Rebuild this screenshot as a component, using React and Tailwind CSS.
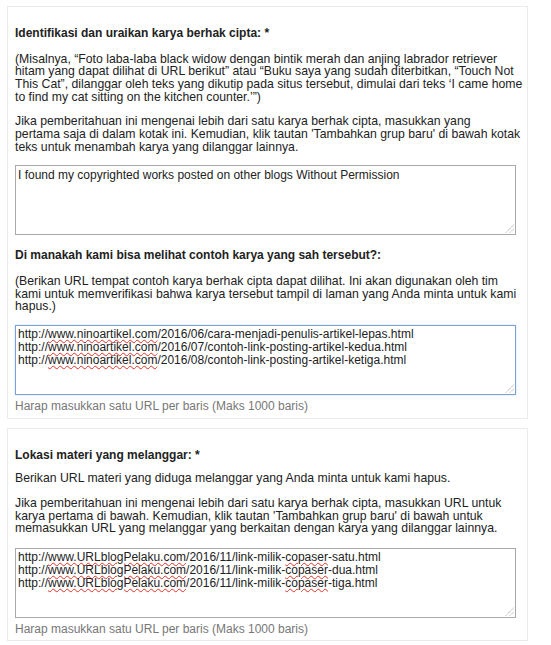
import React from 'react'

const font = { fontFamily: '"Liberation Sans", Arial, sans-serif' }

function Grip() {
  return (
    <svg width="9" height="9" viewBox="0 0 9 9" className="absolute right-[1px] bottom-[1px]">
      <line x1="8.5" y1="1" x2="1" y2="8.5" stroke="#888" strokeWidth="1" strokeDasharray="1 1" />
      <line x1="8.5" y1="5" x2="5" y2="8.5" stroke="#888" strokeWidth="1" strokeDasharray="1 1" />
    </svg>
  )
}

function Box({ focused, children }) {
  return (
    <div
      className={
        'relative w-[501px] h-[70px] px-[2px] pt-[2px] bg-white text-[12px] text-[#222] ' +
        (focused
          ? 'border border-[#7d9fd6] shadow-[0_0_2px_rgba(77,144,254,0.35)]'
          : 'border border-[#a9a9a9]')
      }
    >
      {children}
      <Grip />
    </div>
  )
}

// kata yang digarisbawahi oleh pemeriksa ejaan
function Typo({ children }) {
  return (
    <span className="underline decoration-wavy decoration-[#e0302a] decoration-1 underline-offset-[1px]">
      {children}
    </span>
  )
}

// paragraf dengan baris yang sama seperti di tangkapan layar
function Lines({ lines, className = '' }) {
  return (
    <p className={'whitespace-nowrap ' + className}>
      {lines.map((l, i) => (
        <React.Fragment key={i}>
          {l}
          {i < lines.length - 1 && <br />}
        </React.Fragment>
      ))}
    </p>
  )
}

function Hint() {
  return <p className="mt-[5px] text-[12px] text-[#777]">Harap masukkan satu URL per baris (Maks 1000 baris)</p>
}

export default function App() {
  const sample = [
    '2016/06/cara-menjadi-penulis-artikel-lepas.html',
    '2016/07/contoh-link-posting-artikel-kedua.html',
    '2016/08/contoh-link-posting-artikel-ketiga.html',
  ]
  const pelaku = ['satu', 'dua', 'tiga']

  return (
    <div className="min-h-screen bg-white pt-[6px] pl-[7px]" style={font}>
      <div className="w-[521px] text-[12.25px] leading-[12.65px] text-[#222]">
        {/* kartu 1 */}
        <div className="border border-[#ebebeb] px-[7px] pt-[20px] pb-[5px]">
          <h2 className="font-bold text-[12px] mb-[13px]">Identifikasi dan uraikan karya berhak cipta: *</h2>
          <Lines
            className="mb-[12px]"
            lines={[
              '(Misalnya, “Foto laba-laba black widow dengan bintik merah dan anjing labrador retriever',
              'hitam yang dapat dilihat di URL berikut” atau “Buku saya yang sudah diterbitkan, “Touch Not',
              'This Cat”, dilanggar oleh teks yang dikutip pada situs tersebut, dimulai dari teks ‘I came home',
              'to find my cat sitting on the kitchen counter.’”)',
            ]}
          />
          <Lines
            className="mb-[12px]"
            lines={[
              'Jika pemberitahuan ini mengenai lebih dari satu karya berhak cipta, masukkan yang',
              "pertama saja di dalam kotak ini. Kemudian, klik tautan 'Tambahkan grup baru' di bawah kotak",
              'teks untuk menambah karya yang dilanggar lainnya.',
            ]}
          />
          <Box>
            <div className="pt-[1px]">I found my copyrighted works posted on other blogs Without Permission</div>
          </Box>

          <h2 className="font-bold text-[12px] mt-[14px] mb-[13px]">
            Di manakah kami bisa melihat contoh karya yang sah tersebut?:
          </h2>
          <Lines
            className="mb-[12px]"
            lines={[
              '(Berikan URL tempat contoh karya berhak cipta dapat dilihat. Ini akan digunakan oleh tim',
              'kami untuk memverifikasi bahwa karya tersebut tampil di laman yang Anda minta untuk kami',
              'hapus.)',
            ]}
          />
          <Box focused>
            {sample.map(s => (
              <div key={s} className="leading-[13px]">
                http://<Typo>www.ninoartikel.com</Typo>/{s}
              </div>
            ))}
          </Box>
          <Hint />
        </div>

        {/* kartu 2 */}
        <div className="mt-[9px] border border-[#ebebeb] px-[7px] pt-[20px] pb-[5px]">
          <h2 className="font-bold text-[12px] mb-[11px]">Lokasi materi yang melanggar: *</h2>
          <p className="mb-[12px]">Berikan URL materi yang diduga melanggar yang Anda minta untuk kami hapus.</p>
          <Lines
            className="mb-[13px]"
            lines={[
              'Jika pemberitahuan ini mengenai lebih dari satu karya berhak cipta, masukkan URL untuk',
              "karya pertama di bawah. Kemudian, klik tautan 'Tambahkan grup baru' di bawah untuk",
              'memasukkan URL yang melanggar yang berkaitan dengan karya yang dilanggar lainnya.',
            ]}
          />
          <Box>
            {pelaku.map(s => (
              <div key={s} className="leading-[13px]">
                http://<Typo>www.URLblogPelaku.com</Typo>/2016/11/link-milik-<Typo>copaser</Typo>-{s}.html
              </div>
            ))}
          </Box>
          <Hint />
        </div>
      </div>
    </div>
  )
}
